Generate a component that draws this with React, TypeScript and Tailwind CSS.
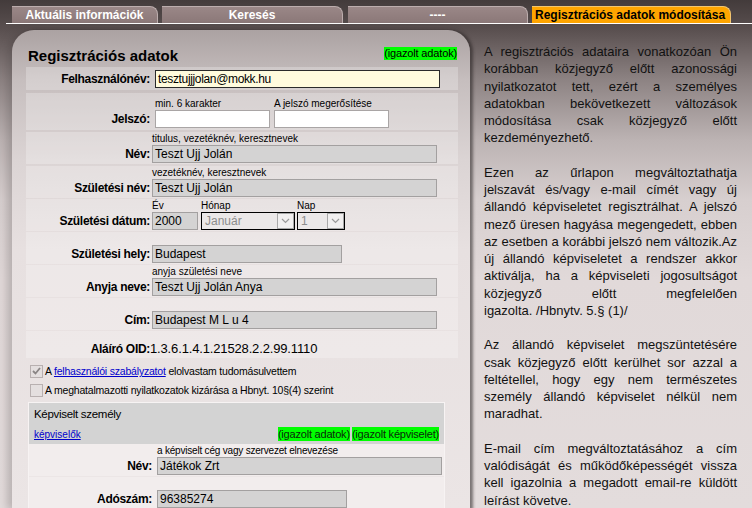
import React from "react";

function Chevron() {
  return (
    <svg width="9" height="6" viewBox="0 0 9 6" fill="none">
      <path d="M1 1 L4.5 4.5 L8 1" stroke="#9a9a9a" strokeWidth="1.2" />
    </svg>
  );
}

function Select({ w, value }: { w: string; value: string }) {
  return (
    <div className={`${w} h-[18px] border border-black bg-[#ebe8e8] flex items-center`}>
      <span className="flex-1 pl-[3px] text-[12px] leading-[16px] text-[#8c8c8c]">{value}</span>
      <span className="w-[17px] h-[16px] border border-[#a8a8a8] bg-[#f1efef] flex items-center justify-center">
        <Chevron />
      </span>
    </div>
  );
}

function Gray({ w, value }: { w: string; value: string }) {
  return (
    <div className={`${w} h-[18px] border border-[#a3a0a0] bg-[#d4d3d3] px-[2px] text-[12px] leading-[16px] text-black whitespace-nowrap overflow-hidden`}>
      {value}
    </div>
  );
}

function Label({ children }: { children: React.ReactNode }) {
  return (
    <div className="w-[124px] shrink-0 text-right font-bold text-[12px] leading-[18px] tracking-[-0.3px] text-black self-end">
      {children}
    </div>
  );
}

function Hint({ children }: { children: React.ReactNode }) {
  return <div className="h-[12px] text-[10px] leading-[12px] text-black whitespace-nowrap">{children}</div>;
}

function Check({ checked }: { checked?: boolean }) {
  return (
    <span className="w-[13px] h-[13px] border border-[#b8b0b0] bg-[#e4dfdf] flex items-center justify-center shrink-0">
      {checked && (
        <svg width="9" height="8" viewBox="0 0 9 8" fill="none">
          <path d="M1 4 L3.5 6.5 L8 1" stroke="#8a8585" strokeWidth="1.8" />
        </svg>
      )}
    </span>
  );
}

const J = "text-justify [text-align-last:justify]";

export default function App() {
  return (
    <div className="w-[752px] h-[508px] overflow-hidden relative font-['Liberation_Sans',Arial,sans-serif] bg-[linear-gradient(180deg,#433b3b_0px,#5a5050_30px,#8d8383_80px,#bcb3b3_140px,#d7cfcf_200px,#e1d9d9_280px,#e3dcdc_508px)]">
      {/* tabs */}
      <div className="flex h-[17px] mt-[6px] pl-[12px]">
        <div className="w-[146px] h-full bg-[linear-gradient(180deg,#9a8787,#8b7878)] rounded-tr-[8px] border-t border-r border-[#bcadad] text-white font-bold text-[12px] leading-[16px] text-center">
          Aktuális információk
        </div>
        <div className="ml-[4px] w-[181px] h-full bg-[linear-gradient(180deg,#9a8787,#8b7878)] rounded-tr-[8px] border-t border-r border-[#bcadad] text-white font-bold text-[12px] leading-[16px] text-center">
          Keresés
        </div>
        <div className="ml-[5px] w-[180px] h-full bg-[linear-gradient(180deg,#9a8787,#8b7878)] rounded-tr-[8px] border-t border-r border-[#bcadad] text-white font-bold text-[12px] leading-[16px] text-center">
          ----
        </div>
        <div className="ml-[4px] w-[199px] h-full bg-[#ffa500] rounded-tr-[8px] border-t border-r border-[#f3c670] text-black font-bold text-[12px] leading-[16px] pl-[3px] whitespace-nowrap">
          Regisztrációs adatok módosítása
        </div>
      </div>
      <div className="h-[1px] bg-white ml-[6px]" />

      <div className="flex pl-[12px] mt-[6px]">
        {/* card */}
        <div className="w-[458px] h-[480px] shrink-0 rounded-t-[22px] bg-[linear-gradient(180deg,#aba2a2_0px,#c6bebe_50px,#dbd4d4_130px,#e7e0e0_220px,#ebe5e5_478px)] shadow-[-5px_0_8px_rgba(60,50,50,0.25),3px_0_3px_rgba(40,35,35,0.55)] pt-[17px]">
          <div className="flex items-start justify-between pl-[16px] pr-[13px] h-[20px]">
            <div className="font-bold text-[15px] leading-[18px] text-black">Regisztrációs adatok</div>
            <div className="bg-[#00ff00] text-[11px] leading-[13px] tracking-[-0.15px] text-black">(igazolt adatok)</div>
          </div>

          <div className="ml-[14px] w-[432px] flex flex-col">
            {/* Felhasználónév */}
            <div className="flex h-[23px] pb-[2px] bg-white/25">
              <Label>Felhasználónév:</Label>
              <div className="ml-[5px] self-end w-[285px] h-[18px] border border-[#2a2a2a] bg-[#fffbdd] px-[2px] text-[12px] leading-[16px] tracking-[-0.35px] text-black">
                tesztujjjolan@mokk.hu
              </div>
            </div>
            {/* Jelszó */}
            <div className="mt-[3px] flex h-[37px] pt-[5px] pb-[2px] bg-white/25">
              <Label>Jelszó:</Label>
              <div className="ml-[5px] flex flex-col">
                <div className="flex">
                  <div className="w-[119px]"><Hint>min. 6 karakter</Hint></div>
                  <Hint>A jelszó megerősítése</Hint>
                </div>
                <div className="flex gap-[4px]">
                  <div className="w-[115px] h-[18px] border border-[#a9a5a5] bg-white" />
                  <div className="w-[115px] h-[18px] border border-[#a9a5a5] bg-white" />
                </div>
              </div>
            </div>
            {/* Név */}
            <div className="mt-[2px] flex h-[32px] pt-[1px] pb-[1px] bg-white/25">
              <Label>Név:</Label>
              <div className="ml-[2px] flex flex-col">
                <Hint>titulus, vezetéknév, keresztnevek</Hint>
                <Gray w="w-[285px]" value="Teszt Ujj Jolán" />
              </div>
            </div>
            {/* Születési név */}
            <div className="mt-[2px] flex h-[32px] pt-[1px] pb-[1px] bg-white/25">
              <Label>Születési név:</Label>
              <div className="ml-[2px] flex flex-col">
                <Hint>vezetéknév, keresztnevek</Hint>
                <Gray w="w-[285px]" value="Teszt Ujj Jolán" />
              </div>
            </div>
            {/* Születési dátum */}
            <div className="mt-[1px] flex h-[32px] pt-[1px] pb-[1px] bg-white/25">
              <Label>Születési dátum:</Label>
              <div className="ml-[2px] flex gap-[3px]">
                <div className="flex flex-col">
                  <Hint>Év</Hint>
                  <Gray w="w-[46px]" value="2000" />
                </div>
                <div className="flex flex-col">
                  <Hint>Hónap</Hint>
                  <Select w="w-[94px]" value="Január" />
                </div>
                <div className="flex flex-col -ml-[1px]">
                  <Hint>Nap</Hint>
                  <Select w="w-[48px]" value="1" />
                </div>
              </div>
            </div>
            {/* Születési hely */}
            <div className="mt-[1px] flex h-[32px] pt-[1px] pb-[1px] bg-white/25">
              <Label>Születési hely:</Label>
              <div className="ml-[2px] flex flex-col">
                <Hint>{"\u00a0"}</Hint>
                <Gray w="w-[190px]" value="Budapest" />
              </div>
            </div>
            {/* Anyja neve */}
            <div className="mt-[1px] flex h-[32px] pt-[1px] pb-[1px] bg-white/25">
              <Label>Anyja neve:</Label>
              <div className="ml-[2px] flex flex-col">
                <Hint>anyja születési neve</Hint>
                <Gray w="w-[285px]" value="Teszt Ujj Jolán Anya" />
              </div>
            </div>
            {/* Cím */}
            <div className="mt-[1px] flex h-[32px] pt-[1px] pb-[1px] bg-white/25">
              <Label>Cím:</Label>
              <div className="ml-[2px] flex flex-col">
                <Hint>{"\u00a0"}</Hint>
                <Gray w="w-[285px]" value="Budapest M L u 4" />
              </div>
            </div>
            {/* OID */}
            <div className="mt-[1px] flex h-[27px] items-end bg-white/25">
              <Label>Aláíró OID:</Label>
              <div className="text-[13px] leading-[18px] tracking-[-0.15px] text-black">1.3.6.1.4.1.21528.2.2.99.1110</div>
            </div>
            {/* checkboxes */}
            <div className="mt-[5px] flex items-center h-[16px] pl-[4px] gap-[2px] text-[10.5px] leading-[16px] tracking-[-0.2px] text-black">
              <Check checked />
              <span>
                A <span className="text-[#0000cc] underline">felhasználói szabályzatot</span> elolvastam tudomásulvettem
              </span>
            </div>
            <div className="mt-[3px] flex items-center h-[16px] pl-[4px] gap-[2px] text-[10.5px] leading-[16px] tracking-[-0.2px] text-black">
              <Check />
              <span>A meghatalmazotti nyilatkozatok kizárása a Hbnyt. 10§(4) szerint</span>
            </div>
            {/* Képviselt személy */}
            <div className="mt-[4px] ml-[2px] w-[417px] border border-[#f7f3f3] bg-[#ece6e6]">
              <div className="h-[41px] bg-[#d3d3d3] px-[5px] pt-[2px] flex flex-col">
                <div className="text-[11.5px] leading-[18px] tracking-[-0.3px] text-black">Képviselt személy</div>
                <div className="flex items-end justify-between mt-[4px]">
                  <span className="text-[10px] leading-[12px] text-[#0000cc] underline">képviselők</span>
                  <span className="flex gap-[2px] text-[11px] leading-[14px] tracking-[-0.2px] text-[#0a2a0a]">
                    <span className="bg-[#00ff00]">(igazolt adatok)</span>
                    <span className="bg-[#00ff00]">(igazolt képviselet)</span>
                  </span>
                </div>
              </div>
              <div className="flex h-[32px] pt-[1px] pb-[1px] bg-white/30">
                <div className="w-[123px] shrink-0 text-right font-bold text-[12px] leading-[18px] tracking-[-0.3px] self-end">Név:</div>
                <div className="ml-[5px] flex flex-col">
                  <div className="h-[12px] text-[10px] leading-[12px] tracking-[-0.2px] text-black whitespace-nowrap">a képviselt cég vagy szervezet elnevezése</div>
                  <Gray w="w-[285px]" value="Játékok Zrt" />
                </div>
              </div>
              <div className="mt-[1px] flex h-[32px] pt-[1px] pb-[1px] bg-white/30">
                <div className="w-[123px] shrink-0 text-right font-bold text-[12px] leading-[18px] tracking-[-0.3px] self-end">Adószám:</div>
                <div className="ml-[5px] flex flex-col">
                  <Hint>{"\u00a0"}</Hint>
                  <Gray w="w-[190px]" value="96385274" />
                </div>
              </div>
            </div>
          </div>
        </div>

        {/* right text */}
        <div className="ml-[14px] w-[253px] pt-[13px] text-[13px] leading-[17.25px] text-[#111]">
          <div className={J}>A regisztrációs adataira vonatkozóan Ön</div>
          <div className={J}>korábban közjegyző előtt azonossági</div>
          <div className={J}>nyilatkozatot tett, ezért a személyes</div>
          <div className={J}>adatokban bekövetkezett változások</div>
          <div className={J}>módosítása csak közjegyző előtt</div>
          <div>kezdeményezhető.</div>
          <div className="h-[17.25px]" />
          <div className={J}>Ezen az űrlapon megváltoztathatja</div>
          <div className={J}>jelszavát és/vagy e-mail címét vagy új</div>
          <div className={J}>állandó képviseletet regisztrálhat. A jelszó</div>
          <div className={J}>mező üresen hagyása megengedett, ebben</div>
          <div className={J}>az esetben a korábbi jelszó nem változik.Az</div>
          <div className={J}>új állandó képviseletet a rendszer akkor</div>
          <div className={J}>aktiválja, ha a képviseleti jogosultságot</div>
          <div className={J}>közjegyző előtt megfelelően</div>
          <div>igazolta. /Hbnytv. 5.§ (1)/</div>
          <div className="h-[17.25px]" />
          <div className={J}>Az állandó képviselet megszüntetésére</div>
          <div className={J}>csak közjegyző előtt kerülhet sor azzal a</div>
          <div className={J}>feltétellel, hogy egy nem természetes</div>
          <div className={J}>személy állandó képviselet nélkül nem</div>
          <div>maradhat.</div>
          <div className="h-[17.25px]" />
          <div className={J}>E-mail cím megváltoztatásához a cím</div>
          <div className={J}>valódiságát és működőképességét vissza</div>
          <div className={J}>kell igazolnia a megadott email-re küldött</div>
          <div>leírást követve.</div>
        </div>
      </div>
    </div>
  );
}
